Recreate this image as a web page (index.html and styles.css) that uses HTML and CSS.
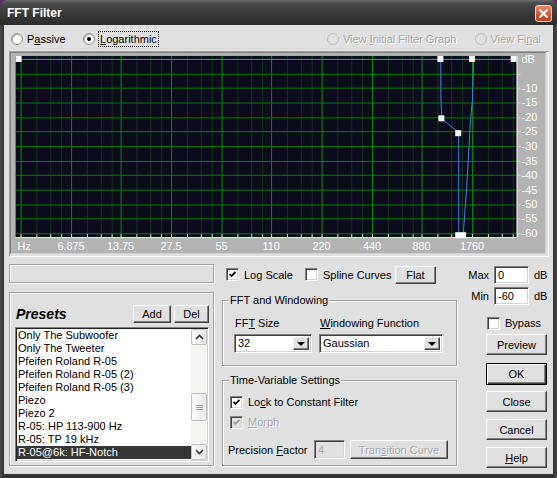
FILE: index.html
```html
<!DOCTYPE html>
<html lang="en">
<head>
  <meta charset="UTF-8">
  <title>FFT Filter</title>
  <link rel="stylesheet" href="styles.css">
</head>
<body>
  <div class="window">
    <div class="titlebar">
      <span class="title">FFT Filter</span>
      <span class="close-btn">
        <svg width="11" height="11" viewBox="0 0 11 11"><path d="M1.5 1.5L9.5 9.5M9.5 1.5L1.5 9.5" stroke="#fff" stroke-width="2.2"/></svg>
      </span>
    </div>

    <div class="client">
      <div class="mode-row">
        <label class="radio radio-passive"><span class="radio-dot"></span><span>P<u>a</u>ssive</span></label>
        <label class="radio radio-log checked"><span class="radio-dot"></span><span class="focus-text"><u>L</u>ogarithmic</span></label>
        <label class="radio radio-initial disabled"><span class="radio-dot"></span><span>View <u>I</u>nitial Filter Graph</span></label>
        <label class="radio radio-final disabled"><span class="radio-dot"></span><span>View Fi<u>n</u>al</span></label>
      </div>

      <div class="graph-panel">
        <svg class="graph" width="536" height="202" viewBox="0 0 536 202">
          <rect x="3" y="3" width="506" height="183" class="plot-bg"/>
          <path class="g-minor" d="M24.5 3V186M38.5 3V186M49.5 3V186M75.5 3V186M89.5 3V186M100.5 3V186M125.5 3V186M139.5 3V186M150.5 3V186M176.5 3V186M190.5 3V186M201.5 3V186M227.5 3V186M241.5 3V186M252.5 3V186M277.5 3V186M291.5 3V186M302.5 3V186M328.5 3V186M342.5 3V186M353.5 3V186M379.5 3V186M393.5 3V186M404.5 3V186M429.5 3V186M443.5 3V186M454.5 3V186M480.5 3V186M494.5 3V186M505.5 3V186"/>
          <path class="g-major" d="M8.5 3V186M59.5 3V186M109.5 3V186M160.5 3V186M211.5 3V186M261.5 3V186M312.5 3V186M363.5 3V186M413.5 3V186M464.5 3V186"/>
          <path class="g-h" d="M3 6.5H509M3 21.5H509M3 35.5H509M3 50.5H509M3 65.5H509M3 79.5H509M3 94.5H509M3 109.5H509M3 123.5H509M3 138.5H509M3 153.5H509M3 167.5H509M3 182.5H509"/>
          <path class="ticks" d="M8.5 183V186M24.5 183V186M38.5 183V186M49.5 183V186M59.5 183V186M75.5 183V186M89.5 183V186M100.5 183V186M109.5 183V186M125.5 183V186M139.5 183V186M150.5 183V186M160.5 183V186M176.5 183V186M190.5 183V186M201.5 183V186M211.5 183V186M227.5 183V186M241.5 183V186M252.5 183V186M261.5 183V186M277.5 183V186M291.5 183V186M302.5 183V186M312.5 183V186M328.5 183V186M342.5 183V186M353.5 183V186M363.5 183V186M379.5 183V186M393.5 183V186M404.5 183V186M413.5 183V186M429.5 183V186M443.5 183V186M454.5 183V186M464.5 183V186M480.5 183V186M494.5 183V186M505.5 183V186M510 21.5H513M510 35.5H513M510 50.5H513M510 65.5H513M510 79.5H513M510 94.5H513M510 109.5H513M510 123.5H513M510 138.5H513M510 153.5H513M510 167.5H513M510 182.5H513"/>
          <path class="axis" d="M3 186.5H509.5V3"/>

          <text x="514" y="10">dB</text>
          <text x="514" y="39">-10</text>
          <text x="514" y="54">-15</text>
          <text x="514" y="69">-20</text>
          <text x="514" y="83">-25</text>
          <text x="514" y="98">-30</text>
          <text x="514" y="113">-35</text>
          <text x="514" y="127">-40</text>
          <text x="514" y="142">-45</text>
          <text x="514" y="157">-50</text>
          <text x="514" y="171">-55</text>
          <text x="514" y="186">-60</text>

          <text x="5" y="199">Hz</text>
          <text x="59" y="199" text-anchor="middle">6.875</text>
          <text x="109" y="199" text-anchor="middle">13.75</text>
          <text x="160" y="199" text-anchor="middle">27.5</text>
          <text x="211" y="199" text-anchor="middle">55</text>
          <text x="261" y="199" text-anchor="middle">110</text>
          <text x="312" y="199" text-anchor="middle">220</text>
          <text x="363" y="199" text-anchor="middle">440</text>
          <text x="413" y="199" text-anchor="middle">880</text>
          <text x="464" y="199" text-anchor="middle">1760</text>

          <path class="curve" d="M3 6.5H509"/>
          <path class="curve" d="M432.5 6V47L433.5 66.5L450.5 80.5V184"/>
          <path class="curve" d="M465.5 6L464.5 47L462.5 67L458.5 137L455.5 177V184"/>

          <rect class="node" x="3" y="3" width="6" height="6"/>
          <rect class="node" x="429" y="3" width="6" height="6"/>
          <rect class="node" x="461" y="3" width="6" height="6"/>
          <rect class="node" x="503" y="3" width="6" height="6"/>
          <rect class="node" x="430" y="63" width="6" height="6"/>
          <rect class="node" x="447" y="78" width="6" height="6"/>
          <rect class="node" x="447" y="181" width="11" height="6"/>
        </svg>
      </div>

      <div class="lower">
        <div class="col-left">
          <div class="status-box etched"></div>
          <div class="presets etched">
            <div class="presets-head">
              <span class="presets-title">Presets</span>
              <button class="btn btn-add">Add</button>
              <button class="btn btn-del">Del</button>
            </div>
            <div class="listbox">
              <ul class="items">
                <li>Only The Subwoofer</li>
                <li>Only The Tweeter</li>
                <li>Pfeifen Roland R-05</li>
                <li>Pfeifen Roland R-05 (2)</li>
                <li>Pfeifen Roland R-05 (3)</li>
                <li>Piezo</li>
                <li>Piezo 2</li>
                <li>R-05: HP 113-900 Hz</li>
                <li>R-05: TP 19 kHz</li>
                <li class="selected">R-05@6k: HF-Notch</li>
                <li>R-05@6k: Hochpass</li>
              </ul>
              <div class="scrollbar">
                <span class="sb-btn"><svg width="9" height="6" viewBox="0 0 9 6"><path d="M1 5L4.5 1.5L8 5" fill="none" stroke="#333" stroke-width="1.6"/></svg></span>
                <span class="sb-track"><span class="sb-thumb"><svg width="7" height="7" viewBox="0 0 7 7"><path d="M0 1.5H7M0 3.5H7M0 5.5H7" stroke="#9a9a9a"/></svg></span></span>
                <span class="sb-btn"><svg width="9" height="6" viewBox="0 0 9 6"><path d="M1 1L4.5 4.5L8 1" fill="none" stroke="#333" stroke-width="1.6"/></svg></span>
              </div>
            </div>
          </div>
        </div>

        <div class="col-mid">
          <div class="view-row">
            <label class="check check-log"><span class="box"><svg width="7" height="7" viewBox="0 0 7 7"><path d="M0.5 3L2.5 5L6.5 1" fill="none" stroke="#000" stroke-width="1.8"/></svg></span><span>Log Scale</span></label>
            <label class="check check-spline"><span class="box"></span><span>Spline Curves</span></label>
            <button class="btn btn-flat">Flat</button>
          </div>

          <div class="group group-fft etched">
            <div class="group-title">FFT and Windowing</div>
            <div class="fft-body">
              <div class="fft-col fft-size">
                <div class="field-label">FF<u>T</u> Size</div>
                <div class="combo"><span class="combo-text">32</span><span class="combo-btn"><span class="tri"></span></span></div>
              </div>
              <div class="fft-col fft-window">
                <div class="field-label"><u>W</u>indowing Function</div>
                <div class="combo"><span class="combo-text">Gaussian</span><span class="combo-btn"><span class="tri"></span></span></div>
              </div>
            </div>
          </div>

          <div class="group group-tv etched">
            <div class="group-title">Time-Variable Settings</div>
            <label class="check tv-lock"><span class="box"><svg width="7" height="7" viewBox="0 0 7 7"><path d="M0.5 3L2.5 5L6.5 1" fill="none" stroke="#000" stroke-width="1.8"/></svg></span><span>Lo<u>c</u>k to Constant Filter</span></label>
            <label class="check tv-morph disabled"><span class="box"><svg width="7" height="7" viewBox="0 0 7 7"><path d="M0.5 3L2.5 5L6.5 1" fill="none" stroke="#a0a0a0" stroke-width="1.8"/></svg></span><span class="dim-text"><u>M</u>orph</span></label>
            <div class="precision-row">
              <span class="precision-label">Precision <u>F</u>actor</span>
              <input class="field field-disabled precision-input" type="text" value="4" disabled>
              <button class="btn btn-transition" disabled><span class="dim-text">Tran<u>s</u>ition Curve</span></button>
            </div>
          </div>
        </div>

        <div class="col-right">
          <div class="range-row range-max">
            <span class="range-label">Max</span>
            <input class="field range-input" type="text" value="0">
            <span>dB</span>
          </div>
          <div class="range-row range-min">
            <span class="range-label">Min</span>
            <input class="field range-input" type="text" value="-60">
            <span>dB</span>
          </div>
          <label class="check bypass"><span class="box"></span><span>Bypass</span></label>
          <button class="btn side-btn btn-preview">Preview</button>
          <button class="btn side-btn btn-ok">OK</button>
          <button class="btn side-btn btn-close">Close</button>
          <button class="btn side-btn btn-cancel">Cancel</button>
          <button class="btn side-btn btn-help"><span><u>H</u>elp</span></button>
        </div>
      </div>
    </div>
  </div>
</body>
</html>
```

FILE: styles.css
```css
:root {
  --face: #e0e0e0;
  --shadow: #808080;
  --dark: #404040;
  --light: #fff;
  --etch: #a3a3a3;
  --dim: #a6a6a6;
}
* { box-sizing: border-box; }
body {
  margin: 0;
  background: #5b2a6e;
  font-family: "Liberation Sans", Arial, sans-serif;
  font-size: 11px;
  color: #000;
}
u { text-decoration: underline; }

.window {
  width: 557px;
  height: 478px;
  display: flex;
  flex-direction: column;
  background: linear-gradient(90deg, #4a4a4a, #333 4px, #333 553px, #4a4a4a);
  border-radius: 7px 7px 0 0;
  overflow: hidden;
}
.titlebar {
  height: 25px;
  flex: none;
  display: flex;
  align-items: center;
  justify-content: space-between;
  padding: 1px 5px 0 7px;
  background: linear-gradient(#6e6e6e 0, #4b4b4b 3px, #3a3a3a 50%, #2c2c2c 100%);
}
.title {
  color: #fff;
  font-weight: bold;
  font-size: 12px;
}
.close-btn {
  width: 17px;
  height: 17px;
  border: 1px solid #f4d0c8;
  border-radius: 3px;
  background: linear-gradient(#ec8a6c, #d4512e 60%, #c0401f);
  display: flex;
  align-items: center;
  justify-content: center;
}
.close-btn svg { display: block; }

.client {
  flex: 1;
  margin: 0 4px 4px;
  background: var(--face);
}

/* top radio row */
.mode-row {
  height: 26px;
  display: flex;
  align-items: center;
  padding: 2px 12px 0 7px;
}
.radio {
  display: flex;
  align-items: center;
  gap: 4px;
  white-space: nowrap;
}
.radio-passive { width: 72px; }
.radio-log { flex: 1; gap: 3px; }
.radio-initial { margin-right: 19px; }
.radio-final { gap: 3px; }
.radio-dot {
  width: 12px;
  height: 12px;
  flex: none;
  border-radius: 50%;
  background: #fff;
  border: 1px solid #8c8c8c;
  box-shadow: inset 1px 1px 1px #b4b4b4;
  display: flex;
  align-items: center;
  justify-content: center;
}
.radio.checked .radio-dot::after {
  content: "";
  width: 4px;
  height: 4px;
  border-radius: 50%;
  background: #000;
}
.radio.disabled { color: var(--dim); text-shadow: 1px 1px 0 #fff; }
.radio.disabled .radio-dot {
  background: var(--face);
  border-color: #bcbcbc;
  box-shadow: none;
}
.focus-text {
  border: 1px dotted #000;
  padding: 1px 1px;
}

/* graph */
.graph-panel {
  margin-left: 5px;
  width: 540px;
  height: 206px;
  border: 1px solid;
  border-color: #a0a0a0 #fff #fff #a0a0a0;
}
.graph {
  display: block;
  border: 1px solid;
  border-color: #808080 #d0d0d0 #d0d0d0 #808080;
  background: #b3b3b3;
}
.graph text {
  font-family: "Liberation Sans", Arial, sans-serif;
  font-size: 11px;
  fill: #fff;
}
.plot-bg { fill: #0b0b1b; }
.g-minor { stroke: #0f3a12; stroke-width: 1; }
.g-major { stroke: #009000; stroke-width: 1; }
.g-h { stroke: #007c00; stroke-width: 1; }
.ticks { stroke: #d8d8d8; stroke-width: 1; }
.axis { stroke: #f0f0f0; stroke-width: 1; fill: none; }
.curve { stroke: #3f7ff2; stroke-width: 1; fill: none; }
.node { fill: #fff; }

/* lower area */
.lower {
  display: grid;
  grid-template-columns: 205px 235px 84px;
  column-gap: 8px;
  margin: 7px 0 0 5px;
}
.etched {
  border: 1px solid var(--etch);
  box-shadow: inset 1px 1px #fff, 1px 1px #fff;
}

.btn {
  font: inherit;
  color: #000;
  background: var(--face);
  border: 1px solid;
  border-color: var(--light) var(--dark) var(--dark) var(--light);
  box-shadow: inset -1px -1px var(--shadow);
  padding: 0;
  display: flex;
  align-items: center;
  justify-content: center;
}
.btn:disabled { color: var(--dim); }

.status-box { height: 19px; }
.presets {
  margin-top: 9px;
  height: 174px;
  padding: 12px 4px 0 5px;
}
.presets-head {
  display: flex;
  align-items: center;
  height: 18px;
}
.presets-title {
  flex: 1;
  padding-left: 1px;
  font-size: 14px;
  font-weight: bold;
  font-style: italic;
}
.btn-add { width: 38px; height: 18px; }
.btn-del { width: 35px; height: 18px; margin-left: 3px; }

.listbox {
  display: flex;
  width: 194px;
  height: 135px;
  margin-top: 4px;
  padding: 1px;
  background: #fff;
  border: 1px solid;
  border-color: #808080 #fff #fff #808080;
  box-shadow: inset 1px 1px #202020, inset -1px -1px #d4d4d4;
}
.items {
  flex: 1;
  list-style: none;
  margin: 0;
  padding: 0;
  overflow: hidden;
}
.items li {
  height: 13px;
  line-height: 13px;
  padding-left: 1px;
  white-space: nowrap;
}
.items li.selected { background: #363636; color: #fff; }

.scrollbar {
  width: 16px;
  flex: none;
  display: flex;
  flex-direction: column;
  background: #f4f4f2;
}
.sb-btn, .sb-thumb {
  border: 1px solid #c2c2c2;
  border-radius: 2px;
  background: linear-gradient(90deg, #fafafa, #e8e8e8);
  display: flex;
  align-items: center;
  justify-content: center;
}
.sb-btn { height: 16px; flex: none; }
.sb-track {
  flex: 1;
  display: flex;
  flex-direction: column;
  padding-top: 48px;
}
.sb-thumb { height: 28px; }
.sb-btn svg, .sb-thumb svg { display: block; }

/* middle column */
.view-row {
  display: flex;
  align-items: center;
  height: 19px;
  margin-top: 1px;
  padding-left: 4px;
}
.check {
  display: flex;
  align-items: center;
  gap: 5px;
  white-space: nowrap;
}
.check-log { width: 79px; }
.check-spline { width: 90px; }
.btn-flat { width: 41px; height: 18px; }
.box {
  width: 13px;
  height: 13px;
  flex: none;
  background: #fff;
  border: 1px solid;
  border-color: #808080 #fff #fff #808080;
  box-shadow: inset 1px 1px var(--dark), inset -1px -1px #d4d4d4;
  display: flex;
  align-items: center;
  justify-content: center;
}
.box svg { display: block; }
.check.disabled .box { background: var(--face); }
.dim-text { color: var(--dim); text-shadow: 1px 1px 0 #fff; }

.group-title {
  width: fit-content;
  margin: -7px 0 0 6px;
  padding: 0 1px;
  line-height: 13px;
  background: var(--face);
}
.group-fft { margin-top: 16px; height: 66px; }
.fft-body {
  display: flex;
  gap: 7px;
  padding: 10px 0 0 11px;
}
.fft-size { width: 78px; }
.fft-window { width: 124px; }
.field-label { line-height: 13px; padding-left: 1px; }
.combo {
  display: flex;
  height: 19px;
  margin-top: 4px;
  padding: 2px;
  background: #fff;
  border: 1px solid;
  border-color: #808080 #fff #fff #808080;
  box-shadow: inset 1px 1px var(--dark), inset -1px -1px #d4d4d4;
}
.combo-text { flex: 1; padding-left: 1px; line-height: 13px; }
.combo-btn {
  width: 16px;
  flex: none;
  background: var(--face);
  border: 1px solid;
  border-color: #f4f4f4 var(--dark) var(--dark) #f4f4f4;
  box-shadow: inset -1px -1px var(--shadow);
  display: flex;
  align-items: center;
  justify-content: center;
}
.tri {
  width: 0;
  height: 0;
  border-left: 4px solid transparent;
  border-right: 4px solid transparent;
  border-top: 4px solid #000;
}

.group-tv { margin-top: 14px; height: 86px; }
.tv-lock { margin: 8px 0 0 7px; height: 14px; }
.tv-morph { margin: 6px 0 0 7px; height: 14px; }
.precision-row {
  display: flex;
  align-items: center;
  margin: 11px 0 0 5px;
  height: 19px;
}
.precision-label { width: 86px; }
.field {
  font: inherit;
  color: #000;
  background: #fff;
  border: 1px solid;
  border-color: #808080 #fff #fff #808080;
  box-shadow: inset 1px 1px var(--dark), inset -1px -1px #d4d4d4;
  padding: 0 3px;
  outline: none;
}
.field-disabled { background: var(--face); color: var(--dim); }
.precision-input { width: 31px; height: 19px; }
.btn-transition { width: 98px; height: 19px; margin-left: 5px; }

/* right column */
.range-row {
  display: flex;
  align-items: center;
  height: 18px;
}
.range-max { margin-top: 2px; }
.range-min { margin-top: 3px; }
.range-label { width: 24px; text-align: right; }
.range-input { width: 35px; height: 18px; margin: 0 5px; }
.bypass { margin: 11px 0 0 22px; height: 14px; }
.side-btn { width: 61px; height: 21px; margin-left: 21px; }
.btn-preview { margin-top: 4px; }
.btn-ok {
  margin-top: 8px;
  height: 22px;
  border: 1px solid #000;
  box-shadow: inset 1px 1px #fff, inset -1px -1px var(--dark), inset -2px -2px var(--shadow);
}
.btn-close { margin-top: 6px; }
.btn-cancel { margin-top: 7px; }
.btn-help { margin-top: 7px; }
```
